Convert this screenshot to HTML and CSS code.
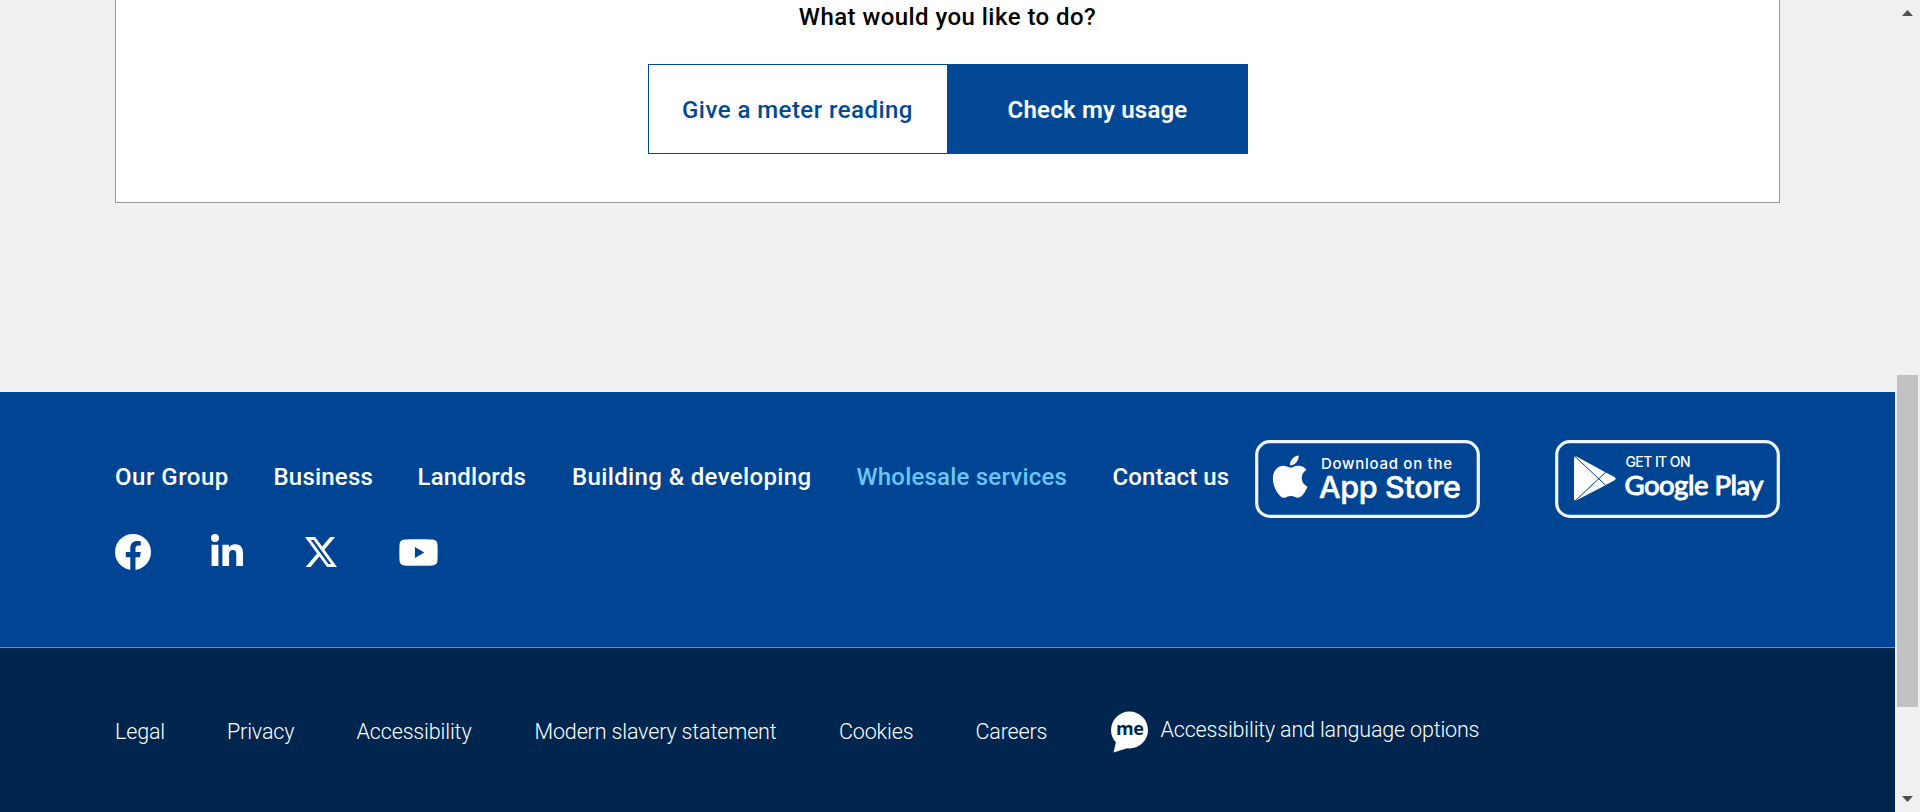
FILE: index.html
```
<!DOCTYPE html>
<html lang="en">
<head>
<meta charset="utf-8">
<title>What would you like to do?</title>
<link rel="stylesheet" href="styles.css">
</head>
<body>
<div class="window">
  <div class="page">
    <main class="main">
      <section class="card">
        <h2 class="card-title">What would you like to do?</h2>
        <div class="choices">
          <a class="choice choice-outline">Give a meter reading</a>
          <a class="choice choice-solid">Check my usage</a>
        </div>
      </section>
    </main>
    <footer class="footer">
      <div class="footer-main">
        <div class="footer-left">
          <nav class="nav">
            <a class="ls-wide">Our Group</a>
            <a>Business</a>
            <a>Landlords</a>
            <a class="ls-mid">Building &amp; developing</a>
            <a class="active">Wholesale services</a>
            <a class="ls-tight">Contact us</a>
          </nav>
          <div class="social">
            <svg class="fb" viewBox="0 0 36 36"><circle cx="18" cy="18" r="18" fill="#fff"/><path d="M15.300 37V23.200h-4.500v-5.100h4.500v-4c0-4.700 2.800-7.200 7-7.200 1.200 0 2.300.1 3.500.3v4.200h-2.300c-2.300 0-3 1.400-3 2.900v3.800h5.300l-.9 5.100h-4.400V37z" fill="#004494"/></svg>
            <svg class="li" viewBox="0 0 32 32" fill="#fff"><circle cx="4" cy="4" r="4"/><path d="M.6 10.800h6.800V32H.6zM11.400 10.800h6.500v2.900c1.100-2.100 3.400-3.400 6.200-3.400 6.700 0 7.900 4.400 7.900 10.100V32h-6.700V21.700c0-2.500-.1-5.600-3.400-5.600-3.500 0-3.800 2.700-3.800 5.400V32h-6.700z"/></svg>
            <svg class="tx" viewBox="1.250 2.250 21.580 19.500" preserveAspectRatio="none" fill="#fff"><path d="M18.244 2.250h3.308l-7.227 8.260 8.502 11.240H16.170l-5.214-6.817L4.990 21.750H1.680l7.730-8.835L1.254 2.250H8.080l4.713 6.231zm-1.161 17.520h1.833L7.084 4.126H5.117z"/></svg>
            <svg class="yt" viewBox="0 0 40 28"><path d="M5.500.5C11 .1 29 .1 34.500.5 38 .7 39.500 2.500 39.700 6c.2 5 .2 11 0 16-.2 3.500-1.700 5.200-5.200 5.500-5.500.4-23.500.4-29 0C2 27.200.5 25.500.3 22c-.2-5-.2-11 0-16C.5 2.500 2 .7 5.500.5z" fill="#fff"/><path d="M16.300 8.300v11.400L26 14z" fill="#004494"/></svg>
          </div>
        </div>
        <div class="badges">
          <svg class="badge" viewBox="0 0 225 78">
            <rect class="badge-frame" x="1.700" y="1.700" width="221.600" height="74.600" rx="13"/>
            <g transform="translate(13.900 15.300) scale(1.810 1.790)"><path fill="#fff" d="M20.700 8.180c-.14.100-2.550 1.470-2.550 4.500 0 3.500 3.070 4.740 3.160 4.770-.01.080-.49 1.690-1.620 3.330-1 1.450-2.050 2.890-3.650 2.890s-2.010-.93-3.850-.93c-1.800 0-2.440.96-3.900.96s-2.480-1.340-3.650-2.980C3.280 18.780 2.180 15.770 2.180 12.900c0-4.580 2.980-7.010 5.910-7.010 1.560 0 2.860 1.020 3.840 1.020.93 0 2.380-1.090 4.160-1.090.67 0 3.090.06 4.670 2.360zM15.220 3.890c.73-.87 1.250-2.080 1.250-3.290 0-.17-.01-.34-.04-.47-1.190.040-2.610.79-3.460 1.780-.67.760-1.300 1.980-1.300 3.200 0 .19.030.37.050.43.070.010.2.030.32.030 1.070 0 2.410-.71 3.180-1.680z"/></g>
            <text class="small" x="66" y="28.500" textLength="131">Download on the</text>
            <text class="big" x="64" y="58" textLength="142">App Store</text>
          </svg>
          <svg class="badge" viewBox="0 0 225 78">
            <rect class="badge-frame" x="1.700" y="1.700" width="221.600" height="74.600" rx="13"/>
            <path fill="#fff" d="M19 17.500 Q19.500 16 21.500 16.500 L50 32 60 37.300 Q61.500 38.700 60 40 L50 45.500 22 60 Q19.500 61.500 19 59.500z"/>
            <path d="M20 16.500 52 46.500M20 61 52 31" stroke="#004494" stroke-width="1"/>
            <text class="get" x="70.500" y="27" textLength="65">GET IT ON</text>
            <text class="play" x="69.500" y="54.500" textLength="139">Google Play</text>
          </svg>
        </div>
      </div>
      <div class="footer-legal">
        <a>Legal</a>
        <a>Privacy</a>
        <a>Accessibility</a>
        <a>Modern slavery statement</a>
        <a>Cookies</a>
        <a>Careers</a>
        <a class="options">
          <svg class="me" viewBox="0 0 37 42"><circle cx="18.500" cy="19" r="18.500" fill="#fff"/><path d="M5 31 2.500 41.500 17 37z" fill="#fff"/><text x="18.700" y="24" text-anchor="middle">me</text></svg>
          <span>Accessibility and language options</span>
        </a>
      </div>
    </footer>
  </div>
  <div class="scrollbar">
    <svg class="arrow" viewBox="0 0 11 6"><path d="M0 6 5.500 0 11 6z"/></svg>
    <div class="thumb"></div>
    <svg class="arrow" viewBox="0 0 11 6"><path d="M0 0 5.500 6 11 0z"/></svg>
  </div>
</div>
</body>
</html>
```
FILE: styles.css
```
* { box-sizing: border-box; }
body { margin: 0; background: #f1f1f1; font-family: Roboto, "Open Sans", sans-serif; overflow: hidden; }
svg { display: block; flex: none; }
.window { display: flex; height: 812px; }
.page { width: 1895px; display: flex; flex-direction: column; }
.main { height: 392px; padding: 0 115px; }
.card { height: 203px; background: #fff; border: 1px solid #999; border-top: 0; display: flex; flex-direction: column; align-items: center; }
.card-title { margin: 0; height: 64px; font-size: 24px; font-weight: 500; line-height: 34px; letter-spacing: .45px; color: #000; }
.choices { display: flex; width: 600px; height: 90px; }
.choice { flex: 1; display: flex; align-items: center; justify-content: center; border: 1px solid #034895; font-size: 24px; padding-top: 2px; }
.choice-outline { font-weight: 500; letter-spacing: .46px; color: #034895; border-right: 0; }
.choice-solid { font-weight: 600; letter-spacing: .2px; color: #fff; background: #034895; padding-left: 1px; }
.footer-main { height: 256px; background: #004494; border-bottom: 1px solid #5cab46; padding: 48px 115px 0; display: flex; justify-content: space-between; }
.nav { display: grid; grid-template-columns: 158.500px 144px 154.500px 284.500px 256px auto; padding-top: 20px; font-size: 24px; line-height: 34px; font-weight: 500; letter-spacing: .2px; color: #fff; white-space: nowrap; }
.nav .ls-wide { letter-spacing: .5px; }
.nav .ls-mid { letter-spacing: .37px; }
.nav .ls-tight { letter-spacing: .1px; }
.nav .active { color: #6cc5f5; }
.social { display: flex; align-items: flex-end; height: 36px; margin-top: 40px; }
.fb { width: 36px; height: 36px; margin-bottom: 0; }
.li { width: 32px; height: 32px; margin: 0 0 4px 60px; }
.tx { width: 32px; height: 30px; margin: 0 0 3px 61.500px; }
.yt { width: 39px; height: 27px; margin: 0 0 4px 62.500px; }
.badges { display: flex; gap: 75px; }
.badge { width: 225px; height: 78px; }
.badge text { fill: #fff; font-family: Inter, sans-serif; }
.badge-frame { fill: none; stroke: #f0f3fb; stroke-width: 3.200px; }
.badge .small { font-size: 15px; font-weight: 500; }
.badge .big { font-size: 30.500px; font-weight: 500; stroke: #fff; stroke-width: .5px; }
.badge .get { font-size: 14px; font-weight: 500; }
.badge .play { font-family: Lato, sans-serif; font-size: 27.500px; font-weight: 400; stroke: #fff; stroke-width: 1px; }
.footer-legal { height: 164px; background: #002650; padding: 0 115px; display: grid; grid-template-columns: 112px 129.500px 178px 304.500px 136.500px 135.500px auto; align-items: start; font-size: 21.500px; line-height: 30px; font-weight: 300; letter-spacing: -.15px; color: #fff; white-space: nowrap; padding-top: 69px; }
.options { display: flex; gap: 12.500px; margin-top: -6px; letter-spacing: -.18px; }
.options span { padding-top: 4px; }
.me { width: 37px; height: 42px; }
.me text { font: 700 18px "Open Sans", sans-serif; fill: #002650; letter-spacing: -.5px; }
.scrollbar { width: 25px; background: #f0f0f1; display: flex; flex-direction: column; align-items: center; padding: 10px 0 10px; }
.arrow { width: 11px; height: 6px; fill: #505050; }
.thumb { width: 21px; height: 332px; margin: 359px 0 auto; background: #c1c1c1; }
```
